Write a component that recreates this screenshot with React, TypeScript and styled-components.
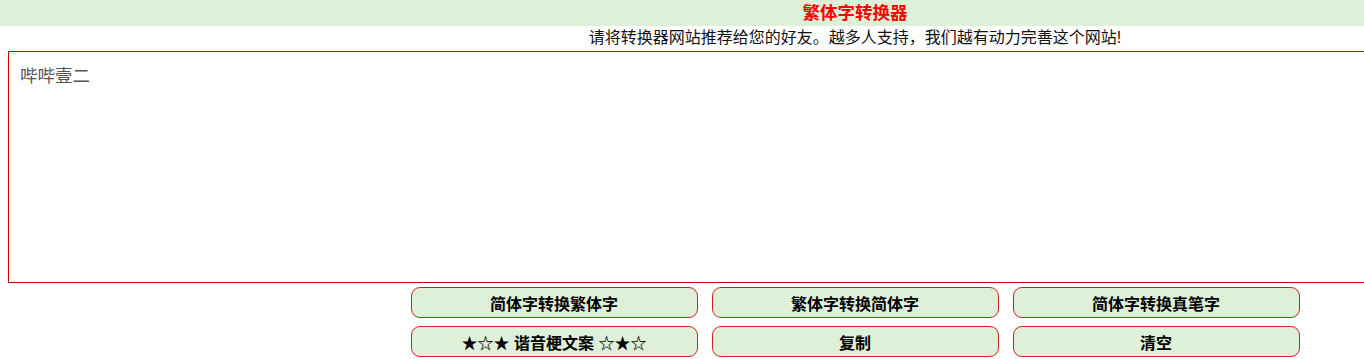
import * as React from 'react';
import styled, { createGlobalStyle } from 'styled-components';

const GlobalStyle = createGlobalStyle`
  body {
    margin: 0;
    background: #fff;
    font-family: "Liberation Sans", "Noto Sans CJK SC", sans-serif;
  }
`;

// the original page is wider than the window, so its centre sits right of the frame's centre
const Page = styled.div`
  width: 1710px;
`;

const Header = styled.div`
  background: #dff0d8;
  height: 26px;
  display: flex;
  align-items: center;
  justify-content: center;
`;

const Title = styled.h1`
  margin: 0;
  color: #ff0000;
  font-size: 17.5px;
  font-weight: bold;
  line-height: 26px;
`;

const Main = styled.div`
  padding: 0 8px;
  display: flex;
  flex-direction: column;
`;

const Notice = styled.p`
  margin: 0;
  height: 25px;
  text-align: center;
  font-size: 16px;
  line-height: 24px;
  color: #111;
`;

const TextArea = styled.textarea`
  box-sizing: border-box;
  width: 100%;
  height: 232px;
  border: 1px solid #d40000;
  padding: 10px 11px;
  font-family: "Liberation Serif", "Noto Sans CJK SC", serif;
  font-size: 17.5px;
  color: #555;
  resize: none;
  outline: none;
`;

const ButtonGrid = styled.div`
  display: grid;
  grid-template-columns: repeat(3, 287px);
  column-gap: 14px;
  row-gap: 8px;
  justify-content: center;
  margin-top: 4px;
`;

const ActionButton = styled.button`
  height: 31px;
  background: #dff0d8;
  border: 1px solid #cc2222;
  border-radius: 9px;
  font-family: "Liberation Sans", "Noto Sans CJK SC", sans-serif;
  font-size: 16px;
  font-weight: bold;
  color: #000;
  cursor: pointer;
`;

const buttons = [
  '简体字转换繁体字',
  '繁体字转换简体字',
  '简体字转换真笔字',
  '★☆★ 谐音梗文案 ☆★☆',
  '复制',
  '清空',
];

export default function App() {
  const [text, setText] = React.useState('哔哔壹二');
  return (
    <Page>
      <GlobalStyle />
      <Header>
        <Title>繁体字转换器</Title>
      </Header>
      <Main>
        <Notice>请将转换器网站推荐给您的好友。越多人支持，我们越有动力完善这个网站!</Notice>
        <TextArea value={text} onChange={e => setText(e.target.value)} />
        <ButtonGrid>
          {buttons.map(label => (
            <ActionButton key={label}>{label}</ActionButton>
          ))}
        </ButtonGrid>
      </Main>
    </Page>
  );
}
